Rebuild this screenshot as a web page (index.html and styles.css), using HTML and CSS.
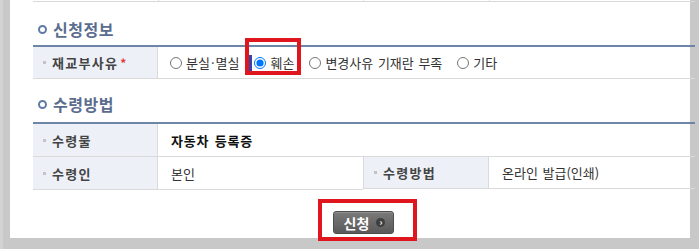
FILE: index.html
```html
<!DOCTYPE html>
<html lang="ko">
<head>
<meta charset="utf-8">
<title>신청정보</title>
<link rel="stylesheet" href="styles.css">
</head>
<body>
<div class="frame">
  <div class="panel">
    <div class="prev-row"><span class="prev-label"></span><span class="prev-box"></span></div>

    <h2 class="sec"><span class="sec-icon"></span>신청정보</h2>
    <div class="grid g1">
      <div class="lab"><span class="dot"></span>재교부사유 <span class="req">*</span></div>
      <div class="val span3 radios">
        <label class="opt"><input type="radio" name="r">분실<span class="mid">·</span>멸실</label>
        <label class="opt"><input type="radio" name="r" checked>훼손</label>
        <label class="opt"><input type="radio" name="r">변경사유 기재란 부족</label>
        <label class="opt"><input type="radio" name="r">기타</label>
      </div>
    </div>

    <h2 class="sec sec2"><span class="sec-icon"></span>수령방법</h2>
    <div class="grid g2">
      <div class="lab"><span class="dot"></span>수령물</div>
      <div class="val span3 strong">자동차 등록증</div>
      <div class="lab"><span class="dot"></span>수령인</div>
      <div class="val">본인</div>
      <div class="lab lab2"><span class="dot"></span>수령방법</div>
      <div class="val">온라인 발급(인쇄)</div>
    </div>

    <div class="actions">
      <button class="btn" type="button">신청 <span class="arr">›</span></button>
    </div>

    <span class="mark mark1"></span>
    <span class="caret"></span>
    <span class="mark mark2"></span>
  </div>
</div>
</body>
</html>
```

FILE: styles.css
```css
html, body {
  margin: 0;
  padding: 0;
}
body {
  background: #cbcbcb;
  font-family: "Noto Sans CJK KR", "Noto Sans", sans-serif;
  color: #333;
}
.frame {
  width: 699px;
  height: 249px;
  box-sizing: border-box;
  padding: 0 9px 11px 10px;
  background: linear-gradient(to right, #d3d3d3 0, #d3d3d3 3px, #c8c8c8 3px, #c8c8c8 100%);
}
.panel {
  position: relative;
  background: #fff;
  height: 238px;
  padding-left: 23px;
  box-sizing: border-box;
}
.prev-row {
  display: flex;
  height: 1px;
  border-bottom: 1px solid #d9d9d9;
  margin-right: -5px;
}
.prev-label {
  width: 125px;
  border-right: 1px solid #d9d9d9;
}
.prev-box {
  margin-left: 204px;
  width: 125px;
  border-left: 1px solid #e2e2e2;
  border-right: 1px solid #e2e2e2;
}
.sec {
  display: flex;
  align-items: center;
  margin: 16px 0 5px 0;
  height: 22px;
  font-size: 16px;
  font-weight: bold;
  color: #5a6d8e;
  letter-spacing: 0.5px;
}
.sec2 {
  margin-top: 14px;
  margin-bottom: 7px;
}
.sec-icon {
  width: 5px;
  height: 5px;
  border: 2px solid #5f7ba5;
  border-radius: 50%;
  margin: 0 6px 0 5px;
}
.grid {
  display: grid;
  grid-template-columns: 125px 205px 126px 1fr;
  border-top: 2px solid #6d86a8;
  margin-right: -5px;
}
.lab, .val {
  display: flex;
  align-items: center;
  border-bottom: 1px solid #dadada;
  height: 32px;
  box-sizing: border-box;
  font-size: 13px;
}
.g2 .lab, .g2 .val { height: 33px; }
.g2 .lab:nth-last-child(-n+2), .g2 .val:last-child { height: 32px; }
.lab {
  background: #edf1f7;
  border-right: 1px solid #dadada;
  font-size: 13px;
  font-weight: bold;
  color: #444;
  padding-left: 10px;
  letter-spacing: 1.3px;
}
.lab2 {
  border-left: 1px solid #dadada;
}
.dot {
  width: 3px;
  height: 3px;
  background: #c4c4c4;
  margin-right: 6px;
}
.req {
  color: #e03a3a;
  margin-left: 2px;
  font-size: 12px;
}
.val {
  padding-left: 13px;
  color: #333;
  word-spacing: 1px;
}
.span3 {
  grid-column: 2 / 5;
}
.strong {
  font-weight: bold;
  font-size: 13px;
  color: #111;
  letter-spacing: 0.8px;
}
.radios {
  padding-left: 12px;
}
.opt {
  display: flex;
  align-items: center;
  margin-right: 15px;
}
.mid {
  margin: 0 1px;
}
.opt input {
  width: 12px;
  height: 12px;
  margin: 0 4px 0 0;
}
.actions {
  display: flex;
  justify-content: center;
  padding-top: 21px;
}
.btn {
  display: flex;
  align-items: center;
  gap: 7px;
  height: 23px;
  padding: 0 8px 0 10px;
  margin-left: 4px;
  border: 1px solid #4e4e4e;
  border-radius: 3px;
  background: linear-gradient(#7a7a7a, #595959);
  color: #fff;
  font-family: "Noto Sans CJK KR", sans-serif;
  font-size: 14px;
  font-weight: bold;
  box-shadow: inset 0 1px 0 #909090;
}
.arr {
  display: inline-flex;
  align-items: center;
  justify-content: center;
  width: 9px;
  height: 9px;
  border-radius: 50%;
  background: #3f3f3f;
  font-size: 9px;
  line-height: 1;
}
.mark {
  position: absolute;
  border: 4px solid #e0161f;
  box-sizing: border-box;
}
.mark1 {
  left: 235px;
  top: 38px;
  width: 56px;
  height: 37px;
}
.mark2 {
  left: 308px;
  top: 199px;
  width: 99px;
  height: 42px;
}
.caret {
  position: absolute;
  left: 239px;
  top: 55px;
  width: 3px;
  height: 16px;
  background: #3644a8;
}
```
